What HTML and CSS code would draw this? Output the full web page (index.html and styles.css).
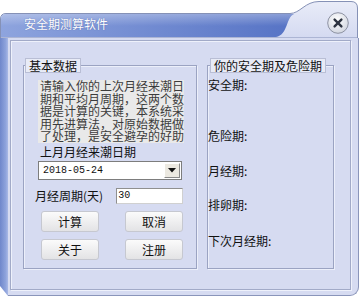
FILE: index.html
```html
<!DOCTYPE html>
<html lang="zh">
<head>
<meta charset="utf-8">
<title>安全期测算软件</title>
<link rel="stylesheet" href="styles.css">
</head>
<body>
<div class="window">
  <div class="titlebar">
    <svg class="chrome" width="361" height="38" viewBox="0 0 361 38" aria-hidden="true">
      <defs>
        <linearGradient id="cap" x1="0" x2="1" y1="0" y2="0">
          <stop offset="0" stop-color="#8ea4de"/>
          <stop offset="1" stop-color="#5673c5"/>
        </linearGradient>
        <linearGradient id="gloss" x1="0" x2="0" y1="0" y2="1">
          <stop offset="0" stop-color="#ffffff" stop-opacity="0.3"/>
          <stop offset="0.5" stop-color="#ffffff" stop-opacity="0"/>
        </linearGradient>
        <linearGradient id="tab" x1="0" x2="0" y1="0" y2="1">
          <stop offset="0" stop-color="#e9ecf8"/>
          <stop offset="1" stop-color="#d4daf1"/>
        </linearGradient>
      </defs>
      <path d="M0.5,38 V19 Q0.5,13.5 6,13.5 H290 C300,13.5 305,1.5 319,1.5 H351 Q357.5,1.5 357.5,8 V38 Z" fill="url(#tab)" stroke="#8591b6"/>
      <path d="M1,38 V19 Q1,14 6,14 H294 C286,17 288,35 276,37 H1 Z" fill="url(#cap)"/>
      <path d="M1,38 V19 Q1,14 6,14 H294 C286,17 288,35 276,37 H1 Z" fill="url(#gloss)"/>
    </svg>
    <span class="title">安全期测算软件</span>
    <span class="close">
      <svg width="22" height="22" viewBox="0 0 22 22" aria-hidden="true">
        <defs>
          <radialGradient id="knob" cx="0.45" cy="0.35" r="0.7">
            <stop offset="0" stop-color="#ffffff"/>
            <stop offset="1" stop-color="#cfd3de"/>
          </radialGradient>
        </defs>
        <circle cx="11" cy="11" r="10.3" fill="url(#knob)" stroke="#8e93a3"/>
        <path d="M7.6,7.6 L14.4,14.4 M14.4,7.6 L7.6,14.4" stroke="#2d3340" stroke-width="2.4" stroke-linecap="round"/>
      </svg>
    </span>
  </div>
  <div class="frame">
    <div class="band"></div>
    <div class="main">
      <div class="panel">
        <div class="group basic">
          <div class="legend">基本数据</div>
          <div class="memo">请输入你的上次月经来潮日期和平均月周期，这两个数据是计算的关键，本系统采用先进算法，对原始数据做了处理，是安全避孕的好助</div>
          <div class="caption">上月月经来潮日期</div>
          <div class="combo">
            <span class="value">2018-05-24</span>
            <span class="drop"><svg width="8" height="5" viewBox="0 0 8 5" aria-hidden="true"><path d="M0,0 H8 L4,4.5 Z" fill="#111"/></svg></span>
          </div>
          <div class="period">
            <span class="period-label">月经周期(天)</span>
            <span class="field">30</span>
          </div>
          <div class="buttons">
            <span class="btn">计算</span>
            <span class="btn">取消</span>
            <span class="btn">关于</span>
            <span class="btn">注册</span>
          </div>
        </div>
        <div class="group result">
          <div class="legend">你的安全期及危险期</div>
          <div class="item">安全期:</div>
          <div class="item">危险期:</div>
          <div class="item">月经期:</div>
          <div class="item">排卵期:</div>
          <div class="item">下次月经期:</div>
        </div>
      </div>
    </div>
  </div>
</div>
</body>
</html>
```

FILE: styles.css
```css
* { box-sizing: border-box; }

body {
  margin: 0;
  background: #ffffff;
  font-family: "Noto Sans CJK SC", "Noto Sans", sans-serif;
  font-size: 12px;
  color: #111;
}

.window {
  width: 359px;
  height: 296px;
  display: flex;
  flex-direction: column;
}

.titlebar {
  position: relative;
  height: 38px;
  flex-shrink: 0;
  display: flex;
  align-items: flex-start;
}

.chrome {
  position: absolute;
  left: 0;
  top: 0;
}

.title {
  position: relative;
  margin: 17px 0 0 24px;
  line-height: 14px;
  color: #ffffff;
  text-shadow: 0 0 1px rgba(40, 60, 130, 0.6);
}

.close {
  position: relative;
  margin: 12px 10px 0 auto;
  width: 22px;
  height: 22px;
  display: block;
}

.close svg { display: block; }

.frame {
  flex: 1;
  display: flex;
}

.band {
  width: 8px;
  background: linear-gradient(90deg, #6f87cb, #8ea3dc 70%, #a9b9e6);
  clip-path: polygon(0 0, 100% 0, 100% 100%, 0 calc(100% - 10px));
}

.main {
  flex: 1;
  display: flex;
  background: #d6dbf1;
  border-right: 1px solid #8a95ba;
  border-bottom: 1px solid #8a95ba;
  border-bottom-right-radius: 9px;
  padding: 2px 7px 5px 2px;
}

.panel {
  flex: 1;
  display: flex;
  align-items: flex-start;
  gap: 10px;
  padding: 24px 0 0 12px;
  border: 1px solid #a2aac8;
  box-shadow: inset 1px 1px 0 #eef1fb, 1px 1px 0 #eef1fb;
}

.group {
  height: 204px;
  border: 1px solid #9ba3c2;
  box-shadow: inset 1px 1px 0 #eceffa, 1px 1px 0 #eceffa;
}

.basic { width: 174px; }
.result { width: 127px; }

.legend {
  width: fit-content;
  height: 15px;
  margin: -8px 0 0 1px;
  padding: 0 3px;
  line-height: 13px;
  border: 1px solid #b9bed5;
  background: #e8ebf6;
  color: #111;
}

.result .legend { margin-left: 2px; }

.memo {
  margin: 7px 0 0 14px;
  width: 146px;
  height: 63px;
  padding-left: 2px;
  background: #e9e9e9;
  color: #3c3c3c;
  line-height: 12.5px;
}

.caption {
  margin: 2px 0 0 16px;
  line-height: 14px;
}

.combo {
  margin: 2px 0 0 14px;
  width: 144px;
  height: 19px;
  display: flex;
  align-items: center;
  background: #ffffff;
  border: 1px solid #7d7d7d;
}

.value {
  padding-left: 4px;
  font-family: "Liberation Mono", monospace;
  font-size: 10px;
  color: #111;
}

.drop {
  margin-left: auto;
  margin-right: 1px;
  width: 16px;
  height: 15px;
  display: flex;
  align-items: center;
  justify-content: center;
  background: #ece9e1;
  border: 1px solid;
  border-color: #ffffff #8a8a8a #8a8a8a #ffffff;
}

.drop svg { display: block; }

.period {
  display: flex;
  align-items: center;
  margin-top: 8px;
}

.period-label {
  margin-left: 11px;
  line-height: 14px;
}

.field {
  margin-left: 13px;
  width: 67px;
  height: 16px;
  padding-left: 1px;
  background: #ffffff;
  border: 1px solid;
  border-color: #8f8f8f #d0d0d0 #d0d0d0 #8f8f8f;
  font-family: "Liberation Mono", monospace;
  font-size: 10px;
  line-height: 14px;
}

.buttons {
  display: grid;
  grid-template-columns: 58px 58px;
  column-gap: 26px;
  row-gap: 7px;
  margin: 7px 0 0 17px;
}

.btn {
  height: 21px;
  display: flex;
  align-items: center;
  justify-content: center;
  line-height: 14px;
  border: 1px solid #c6c8d0;
  border-radius: 3px;
  background: linear-gradient(#fbfbfb, #e3e3e5);
  color: #111;
}

.item {
  line-height: 14px;
  color: #111;
}

.item:nth-of-type(2) { margin-top: 5px; }
.item:nth-of-type(3) { margin-top: 37px; }
.item:nth-of-type(4) { margin-top: 21px; }
.item:nth-of-type(5) { margin-top: 20px; }
.item:nth-of-type(6) { margin-top: 22px; }
```
